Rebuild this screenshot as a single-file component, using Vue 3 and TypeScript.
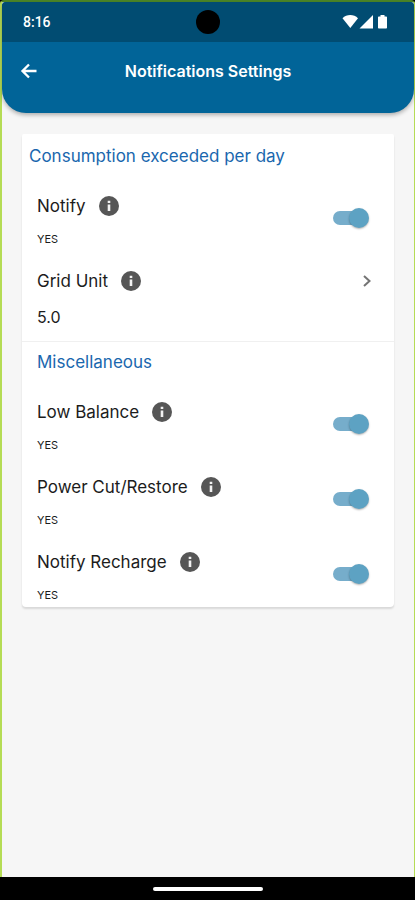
<script setup lang="ts">
import { reactive } from 'vue'

interface Setting {
  id: string
  label: string
  enabled?: boolean
  value?: string
}

interface Section {
  title: string
  inset: boolean
  settings: Setting[]
}

const sections = reactive<Section[]>([
  {
    title: 'Consumption exceeded per day',
    inset: false,
    settings: [
      { id: 'notify', label: 'Notify', enabled: true },
      { id: 'grid-unit', label: 'Grid Unit', value: '5.0' },
    ],
  },
  {
    title: 'Miscellaneous',
    inset: true,
    settings: [
      { id: 'low-balance', label: 'Low Balance', enabled: true },
      { id: 'power', label: 'Power Cut/Restore', enabled: true },
      { id: 'recharge', label: 'Notify Recharge', enabled: true },
    ],
  },
])
</script>

<template>
  <div class="screen">
    <div class="app">
      <header class="header">
        <div class="status">
          <span class="time">8:16</span>
          <span class="camera"></span>
          <svg class="status-icons" viewBox="0 0 51 16" aria-hidden="true">
            <path d="M.5 4.300C4.500-.1 12-.1 16 4.300L8.300 14Z" />
            <path d="M31 1V14.500H17.500Z" />
            <path d="M38.500 1h4v1.500h1.700q.8 0 .8.8v10.400q0 .8-.8.8h-7.400q-.8 0-.8-.8V3.300q0-.8.8-.8h1.700Z" />
          </svg>
        </div>
        <div class="toolbar">
          <button class="back" type="button" aria-label="Back">
            <svg viewBox="0 0 24 24"><path d="M21 12H4.500M12 4.200 4.200 12l7.800 7.800" /></svg>
          </button>
          <h1 class="title">Notifications Settings</h1>
        </div>
      </header>

      <main class="content">
        <div class="card">
          <section v-for="section in sections" :key="section.title" class="section">
            <h2 class="heading" :class="{ inset: section.inset }">{{ section.title }}</h2>
            <div
              v-for="s in section.settings"
              :key="s.id"
              class="row"
              :class="{ 'value-row': s.value }"
            >
              <div class="text">
                <div class="name">
                  <label v-if="!s.value" :for="s.id">{{ s.label }}</label>
                  <span v-else>{{ s.label }}</span>
                  <button class="info" type="button" :aria-label="s.label">
                    <svg viewBox="0 0 20 20">
                      <circle cx="10" cy="10" r="10" fill="#565656" />
                      <path d="M8.700 4.700h2.600v2.300H8.700zM8.700 8.500h2.600v6.500H8.700z" fill="#f2f2f2" />
                    </svg>
                  </button>
                </div>
                <div v-if="s.value" class="value">{{ s.value }}</div>
                <div v-else class="state">{{ s.enabled ? 'YES' : 'NO' }}</div>
              </div>
              <button v-if="s.value" class="more" type="button" :aria-label="s.label">
                <svg viewBox="0 0 12 14"><path d="m3 2 5.500 5L3 12" /></svg>
              </button>
              <input v-else :id="s.id" v-model="s.enabled" class="switch" type="checkbox" role="switch" />
            </div>
          </section>
        </div>
      </main>
    </div>
    <footer class="nav"><span class="handle"></span></footer>
  </div>
</template>

<style>
body {
  margin: 0;
  background: #000;
}
</style>

<style scoped>
.screen {
  display: flex;
  flex-direction: column;
  min-height: 100vh;
  background: #000;
  font-family: Inter, 'Open Sans', sans-serif;
  color: #1c1c1c;
}
.app {
  flex: 1;
  box-sizing: border-box;
  border: solid #b5dc55;
  border-width: 2px 1px 0 2px;
  border-top-color: #4b8527;
  border-radius: 4px 4px 0 0;
  background: #f6f6f6;
}
.header {
  height: 111px;
  border-radius: 4px 4px 24px 24px;
  background: #016498;
  box-shadow: 0 2px 4px rgba(0, 0, 0, 0.3);
  color: #fff;
}
.status {
  display: grid;
  grid-template-columns: 1fr 24px 1fr;
  align-items: center;
  height: 40px;
  padding: 0 21px;
  border-radius: 4px 4px 0 0;
  background: #014c72;
}
.time {
  font: 500 14px/20px Roboto, sans-serif;
}
.camera {
  width: 24px;
  height: 24px;
  border-radius: 50%;
  background: #000;
}
.status-icons {
  justify-self: end;
  width: 51px;
  height: 16px;
  fill: #fff;
}
.toolbar {
  display: grid;
  grid-template-columns: 24px 1fr 24px;
  align-items: center;
  height: 58px;
  padding: 0 15px;
}
button {
  display: flex;
  align-items: center;
  justify-content: center;
  padding: 0;
  border: 0;
  background: none;
}
.back {
  width: 24px;
  height: 24px;
}
.back svg {
  width: 20px;
  height: 20px;
  fill: none;
  stroke: #fff;
  stroke-width: 2.8;
}
.title {
  margin: 0;
  text-align: center;
  font-size: 16px;
  font-weight: 600;
  line-height: 24px;
}
.content {
  padding: 21px 20px 24px;
}
.card {
  padding-top: 2px;
  padding-bottom: 1px;
  border-radius: 2px 2px 4px 4px;
  background: #fff;
  box-shadow: 0 2px 2px rgba(0, 0, 0, 0.12);
}
.section + .section {
  border-top: 1px solid #f0f0f0;
}
.section:last-child {
  margin-bottom: -6px;
}
.heading {
  margin: 0 0 5px;
  padding: 0 7px;
  color: #1a67ae;
  font-size: 17px;
  font-weight: 400;
  line-height: 40px;
}
.inset {
  padding-left: 15px;
}
.row {
  display: flex;
  align-items: center;
  justify-content: space-between;
  height: 74px;
  margin-bottom: 1px;
  padding: 0 25px 0 15px;
}
.text {
  display: flex;
  flex-direction: column;
  gap: 10px;
  padding-top: 6px;
}
.name {
  display: flex;
  align-items: center;
  gap: 13px;
  font-size: 17px;
  line-height: 26px;
}
.info,
.info svg {
  width: 20px;
  height: 20px;
}
.state {
  font-size: 11px;
  line-height: 20px;
}
.value-row {
  align-items: flex-start;
}
.row.value-row {
  height: 84px;
}
.value-row .text {
  padding-top: 12px;
}
.value {
  font-size: 16px;
  line-height: 26px;
}
.more {
  width: 12px;
  height: 26px;
  margin-top: 12px;
  margin-right: -4px;
}
.more svg {
  width: 12px;
  height: 14px;
  fill: none;
  stroke: #747474;
  stroke-width: 2;
}
.switch {
  appearance: none;
  position: relative;
  width: 36px;
  height: 20px;
  margin: 0;
}
.switch::before {
  content: '';
  position: absolute;
  inset: 3px 2px 3px 0;
  border-radius: 7px;
  background: #76adcb;
}
.switch::after {
  content: '';
  position: absolute;
  top: 0;
  left: 0;
  width: 20px;
  height: 20px;
  border-radius: 50%;
  background: #5da2c3;
  box-shadow: 0 1px 2px rgba(0, 0, 0, 0.3);
}
.switch:checked::after {
  left: 16px;
}
.nav {
  display: flex;
  align-items: center;
  justify-content: center;
  height: 23px;
  background: #000;
}
.handle {
  width: 110px;
  height: 4px;
  border-radius: 2px;
  background: #fff;
}
</style>
